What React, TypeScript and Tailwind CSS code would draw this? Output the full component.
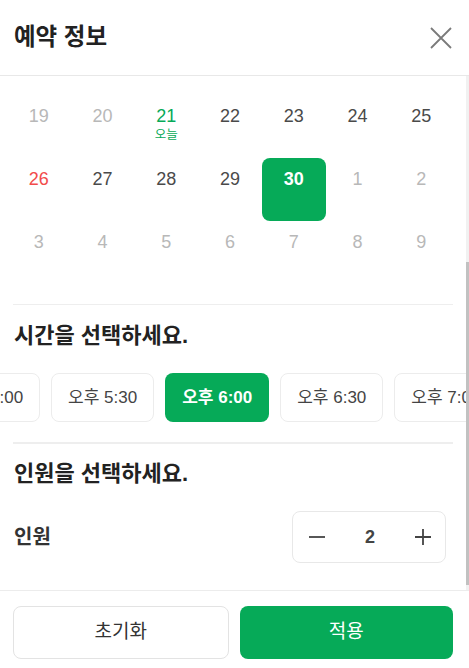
import { useState } from "react";

const GREEN = "bg-[#06aa58]";

type Day = { n: number; tone: "muted" | "normal" | "today" | "sunday" | "selected" };

const WEEKS: Day[][] = [
  [
    { n: 19, tone: "muted" },
    { n: 20, tone: "muted" },
    { n: 21, tone: "today" },
    { n: 22, tone: "normal" },
    { n: 23, tone: "normal" },
    { n: 24, tone: "normal" },
    { n: 25, tone: "normal" },
  ],
  [
    { n: 26, tone: "sunday" },
    { n: 27, tone: "normal" },
    { n: 28, tone: "normal" },
    { n: 29, tone: "normal" },
    { n: 30, tone: "selected" },
    { n: 1, tone: "muted" },
    { n: 2, tone: "muted" },
  ],
  [3, 4, 5, 6, 7, 8, 9].map((n) => ({ n, tone: "muted" as const })),
];

const TIMES = ["오후 5:00", "오후 5:30", "오후 6:00", "오후 6:30", "오후 7:00"];

function toneClass(t: Day["tone"]) {
  switch (t) {
    case "muted":
      return "text-[#b8b8b8]";
    case "today":
      return "text-[#06aa58]";
    case "sunday":
      return "text-[#f24b4b]";
    case "selected":
      return "text-white";
    default:
      return "text-[#4a4a4a]";
  }
}

export default function App() {
  const [time, setTime] = useState("오후 6:00");
  const [count, setCount] = useState(2);

  return (
    <div
      className="flex h-[668px] w-[469px] flex-col bg-white"
      style={{ fontFamily: '"Liberation Sans", "Noto Sans CJK KR", sans-serif' }}
    >
      {/* header */}
      <div className="flex h-[76px] shrink-0 items-center justify-between border-b border-[#e8e8e8] pl-[14px] pr-[16px]">
        <h1 className="text-[23.5px] font-bold text-[#222]">예약 정보</h1>
        <button aria-label="닫기" className="flex h-[24px] w-[24px] items-center justify-center">
          <svg width="22" height="22" viewBox="0 0 22 22" fill="none" stroke="#7a7a7a" strokeWidth="1.8">
            <path d="M1 1 L21 21 M21 1 L1 21" />
          </svg>
        </button>
      </div>

      {/* body */}
      <div className="flex min-h-0 flex-1">
        <div className="flex-1 overflow-hidden pt-[19px]">
          {/* calendar */}
          <div className="grid grid-cols-7 pl-[7px] pr-[13px]">
            {WEEKS.flat().map((d, i) => (
              <div
                key={i}
                className={`flex h-[63px] flex-col items-center rounded-[8px] pt-[10px] ${
                  d.tone === "selected" ? GREEN : ""
                }`}
              >
                <span
                  className={`text-[18px] leading-[22px] ${toneClass(d.tone)} ${
                    d.tone === "selected" ? "font-bold" : ""
                  }`}
                >
                  {d.n}
                </span>
                {d.tone === "today" && (
                  <span className="mt-[1px] text-[12.5px] leading-[14px] text-[#06aa58]">오늘</span>
                )}
              </div>
            ))}
          </div>

          <div className="mx-[13px] mt-[20px] border-t border-[#eeeeee]" />

          {/* time */}
          <h2 className="mx-[14px] mt-[18px] text-[22px] font-bold leading-[26px] text-[#222]">
            시간을 선택하세요.
          </h2>
          <div className="mt-[24px] overflow-hidden">
            <div className="-ml-[63px] flex gap-[11px]">
              {TIMES.map((t) => {
                const on = t === time;
                return (
                  <button
                    key={t}
                    onClick={() => setTime(t)}
                    className={`h-[49px] shrink-0 whitespace-nowrap rounded-[8px] text-[17px] ${
                      on
                        ? `${GREEN} px-[17px] font-bold text-white`
                        : "border border-[#ececec] bg-white px-[16px] text-[#444]"
                    }`}
                  >
                    {t}
                  </button>
                );
              })}
            </div>
          </div>

          <div className="mx-[13px] mt-[20px] border-t-2 border-[#eeeeee]" />

          {/* people */}
          <h2 className="mx-[14px] mt-[17px] text-[22px] font-bold leading-[26px] text-[#222]">
            인원을 선택하세요.
          </h2>
          <div className="mt-[24px] flex items-center justify-between pl-[14px] pr-[20px]">
            <span className="text-[20px] font-bold text-[#333]">인원</span>
            <div className="flex h-[52px] w-[154px] items-center justify-between rounded-[8px] border border-[#e8e8e8] pl-[14px] pr-[12px]">
              <button
                aria-label="감소"
                onClick={() => setCount(Math.max(1, count - 1))}
                className="flex h-[20px] w-[20px] items-center justify-center"
              >
                <svg width="18" height="18" viewBox="0 0 18 18" stroke="#444" strokeWidth="1.8">
                  <path d="M1 9 H17" />
                </svg>
              </button>
              <span className="text-[18px] font-bold text-[#444]">{count}</span>
              <button
                aria-label="증가"
                onClick={() => setCount(count + 1)}
                className="flex h-[20px] w-[20px] items-center justify-center"
              >
                <svg width="18" height="18" viewBox="0 0 18 18" stroke="#444" strokeWidth="1.8">
                  <path d="M1 9 H17 M9 1 V17" />
                </svg>
              </button>
            </div>
          </div>
        </div>

        {/* scrollbar */}
        <div className="flex w-[3px] shrink-0 flex-col bg-[#f1f1f1]">
          <div className="h-[186px]" />
          <div className="h-[323px] bg-[#c1c1c1]" />
        </div>
      </div>

      {/* footer */}
      <div className="flex h-[78px] shrink-0 gap-[11px] border-t border-[#ececec] pl-[13px] pr-[16px] pt-[15px]">
        <button className="h-[53px] flex-1 rounded-[8px] border border-[#e3e3e3] bg-white text-[19px] text-[#333]">
          초기화
        </button>
        <button className={`h-[53px] flex-1 rounded-[8px] ${GREEN} text-[19px] text-white`}>적용</button>
      </div>
    </div>
  );
}
